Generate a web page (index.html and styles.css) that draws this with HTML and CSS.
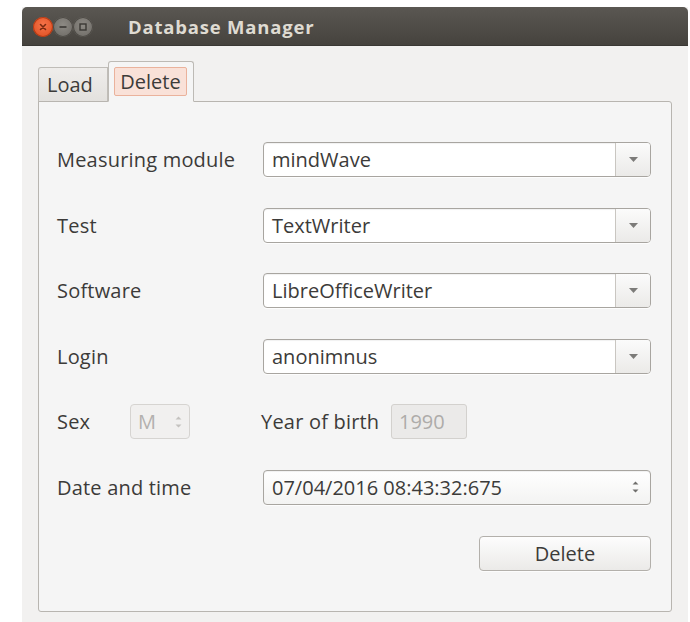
FILE: index.html
```html
<!DOCTYPE html>
<html>
<head>
<meta charset="utf-8">
<title>Database Manager</title>
<link rel="stylesheet" href="styles.css">
</head>
<body>
<div class="window">
  <div class="titlebar">
    <div class="controls">
      <span class="ctl close"><svg width="8" height="8" viewBox="0 0 8 8"><path d="M1.5 1.5L6.5 6.5M6.5 1.5L1.5 6.5" stroke="#7a2a10" stroke-width="1.6" stroke-linecap="round"/></svg></span>
      <span class="ctl"><svg width="10" height="10" viewBox="0 0 10 10"><path d="M1.5 5H8.5" stroke="#3a3834" stroke-width="1.6"/></svg></span>
      <span class="ctl"><svg width="10" height="10" viewBox="0 0 10 10"><rect x="2" y="2" width="6" height="6" fill="none" stroke="#3a3834" stroke-width="1.4"/></svg></span>
    </div>
    <div class="title">Database Manager</div>
  </div>

  <div class="body">
    <div class="tabs">
      <div class="tab">Load</div>
      <div class="tab active"><span class="focus">Delete</span></div>
    </div>

    <div class="panel">
      <div class="row">
        <div class="label">Measuring module</div>
        <div class="combo"><span class="value">mindWave</span><span class="drop"><svg width="9" height="5" viewBox="0 0 9 5"><path d="M0 0H9L4.5 5Z" fill="#7c7b79"/></svg></span></div>
      </div>
      <div class="row">
        <div class="label">Test</div>
        <div class="combo"><span class="value">TextWriter</span><span class="drop"><svg width="9" height="5" viewBox="0 0 9 5"><path d="M0 0H9L4.5 5Z" fill="#7c7b79"/></svg></span></div>
      </div>
      <div class="row">
        <div class="label">Software</div>
        <div class="combo"><span class="value">LibreOfficeWriter</span><span class="drop"><svg width="9" height="5" viewBox="0 0 9 5"><path d="M0 0H9L4.5 5Z" fill="#7c7b79"/></svg></span></div>
      </div>
      <div class="row">
        <div class="label">Login</div>
        <div class="combo"><span class="value">anonimnus</span><span class="drop"><svg width="9" height="5" viewBox="0 0 9 5"><path d="M0 0H9L4.5 5Z" fill="#7c7b79"/></svg></span></div>
      </div>
      <div class="row">
        <div class="label short">Sex</div>
        <div class="spin disabled"><span class="value">M</span><span class="arrows"><svg width="7" height="14" viewBox="0 0 7 14"><path d="M0.5 4.5L3.5 1.5L6.5 4.5ZM0.5 9.5L3.5 12.5L6.5 9.5Z" fill="#c4c2bf"/></svg></span></div>
        <div class="label year">Year of birth</div>
        <div class="field disabled">1990</div>
      </div>
      <div class="row">
        <div class="label">Date and time</div>
        <div class="combo date"><span class="value">07/04/2016 08:43:32:675</span><span class="arrows"><svg width="7" height="14" viewBox="0 0 7 14"><path d="M0.5 4.5L3.5 1.5L6.5 4.5ZM0.5 9.5L3.5 12.5L6.5 9.5Z" fill="#6f6e6c"/></svg></span></div>
      </div>
      <div class="row actions">
        <button class="button">Delete</button>
      </div>
    </div>
  </div>
</div>
</body>
</html>
```

FILE: styles.css
```css
html, body {
  margin: 0;
  padding: 0;
  background: #ffffff;
}

body {
  font-family: "Open Sans", "DejaVu Sans", sans-serif;
  color: #3c3b39;
}

.window {
  margin: 7px 2px 0 22px;
  height: 615px;
  display: flex;
  flex-direction: column;
  background: #f2f1f0;
}

.titlebar {
  height: 39px;
  flex: none;
  display: flex;
  align-items: center;
  background: linear-gradient(#5a5752, #45423d);
  border-radius: 5px 5px 0 0;
  box-shadow: inset 0 -1px 0 #3a3834;
}

.controls {
  display: flex;
  gap: 0;
  padding-left: 11px;
}

.ctl {
  width: 20px;
  height: 20px;
  border-radius: 50%;
  display: flex;
  align-items: center;
  justify-content: center;
  background: radial-gradient(circle at 50% 40%, #8d8a84, #6a6762);
  box-shadow: inset 0 0 0 1px #4d4a45;
}

.ctl.close {
  background: radial-gradient(circle at 50% 40%, #f7744a, #dc4a1c);
  box-shadow: inset 0 0 0 1px #b43a14;
}

.title {
  margin-left: 35px;
  font-size: 18.5px;
  font-weight: 700;
  color: #dfdbd2;
  letter-spacing: 0.8px;
}

.body {
  flex: 1;
  display: flex;
  flex-direction: column;
  padding: 16px 16px 9px 16px;
}

.tabs {
  display: flex;
  align-items: flex-end;
  height: 40px;
  margin-bottom: -1px;
  position: relative;
  z-index: 1;
}

.tab {
  height: 35px;
  width: 70px;
  padding-left: 8px;
  display: flex;
  align-items: center;
  font-size: 20px;
  background: linear-gradient(#efedeb, #e3e1de);
  border: 1px solid #c0bdb8;
  border-bottom-color: #b8b5b0;
  border-radius: 3px 0 0 0;
  box-sizing: border-box;
}

.tab.active {
  height: 41px;
  width: 86px;
  padding: 0 0 0 5px;
  background: #f5f5f5;
  border-color: #bdbab5;
  border-bottom-color: #f5f5f5;
  border-radius: 3px 3px 0 0;
}

.focus {
  display: block;
  width: 73px;
  box-sizing: border-box;
  text-align: center;
  background: #f9e1d8;
  border: 1px solid #eab29c;
  border-radius: 2px;
  line-height: 27px;
}

.panel {
  width: 634px;
  height: 511px;
  box-sizing: border-box;
  background: #f5f5f5;
  border: 1px solid #b8b5b0;
  border-radius: 0 3px 3px 3px;
  padding: 40px 20px 0 18px;
  display: flex;
  flex-direction: column;
  gap: 30.6px;
}

.row {
  height: 35px;
  display: flex;
  align-items: center;
}

.label {
  width: 206px;
  font-size: 20px;
  letter-spacing: 0.2px;
  flex: none;
}

.label.short {
  width: 73px;
}

.label.year {
  width: 130px;
  margin-left: 71px;
}

.combo {
  flex: 1;
  height: 35px;
  box-sizing: border-box;
  display: flex;
  align-items: stretch;
  background: #ffffff;
  border: 1px solid #a8a5a0;
  border-radius: 4px;
  box-shadow: 0 1px 0 rgba(255,255,255,0.8), inset 0 1px 1px rgba(0,0,0,0.06);
  font-size: 20px;
}

.combo .value {
  flex: 1;
  display: flex;
  align-items: center;
  padding-left: 8px;
}

.drop {
  width: 34px;
  display: flex;
  align-items: center;
  justify-content: center;
  border-left: 1px solid #c9c6c1;
  background: linear-gradient(#fbfbfb, #ebeae8);
  border-radius: 0 3px 3px 0;
}

.arrows {
  width: 30px;
  display: flex;
  align-items: center;
  justify-content: center;
}

.combo.date {
  background: linear-gradient(#ffffff, #f3f3f2);
}

.spin {
  width: 60px;
  height: 35px;
  box-sizing: border-box;
  display: flex;
  align-items: center;
  border: 1px solid #d6d4d1;
  border-radius: 4px;
  background: #f1f0ef;
  font-size: 20px;
  color: #b3b1ae;
}

.spin .value {
  flex: 1;
  padding-left: 7px;
}

.spin .arrows {
  width: 22px;
}

.field {
  width: 76px;
  height: 35px;
  box-sizing: border-box;
  display: flex;
  align-items: center;
  padding-left: 7px;
  border: 1px solid #d3d1ce;
  border-radius: 3px;
  background: #ebeae9;
  font-size: 20px;
  color: #aeaca9;
}

.actions {
  justify-content: flex-end;
}

.button {
  width: 172px;
  height: 35px;
  font-family: inherit;
  font-size: 20px;
  color: #3c3b39;
  background: linear-gradient(#fdfdfd, #ebeae8);
  border: 1px solid #b3b0ab;
  border-radius: 4px;
  box-shadow: 0 1px 0 rgba(255,255,255,0.7);
  padding: 0;
}
```
